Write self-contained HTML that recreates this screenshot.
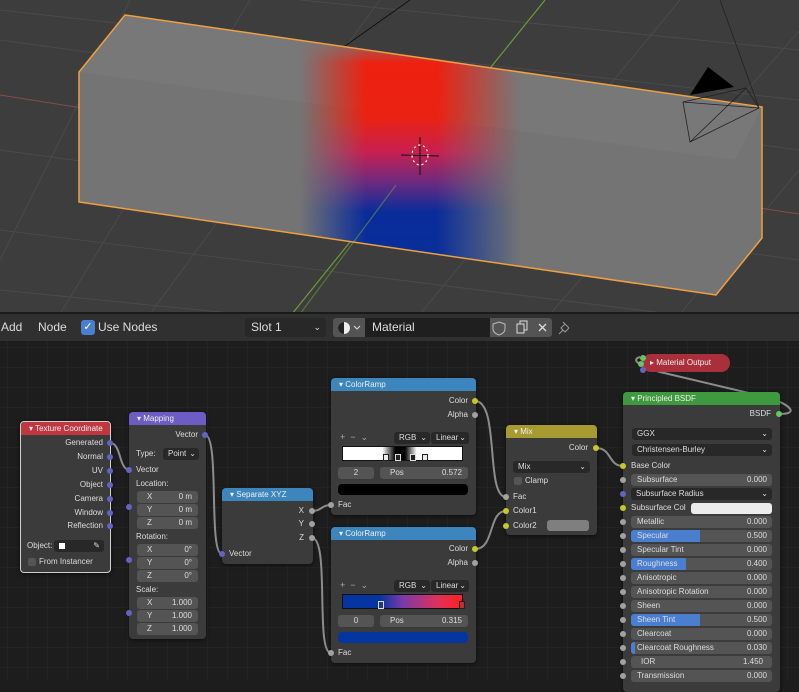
<!DOCTYPE html>
<html><head><meta charset="utf-8"><style>
*{margin:0;padding:0;box-sizing:border-box}
body{width:799px;height:680px;overflow:hidden;background:#1d1d1d;font-family:"Liberation Sans",sans-serif;position:relative}
.a{position:absolute}
.n{position:absolute;background:#3b3b3b;border-radius:4px;box-shadow:0 1px 4px rgba(0,0,0,.6)}
.h{position:absolute;left:0;right:0;top:0;height:13px;border-radius:4px 4px 0 0;color:#eee;font-size:8px;line-height:13px;padding-left:8px}
.t{position:absolute;font-size:8px;line-height:10px;color:#ddd;white-space:nowrap}
.r{text-align:right}
.f{position:absolute;background:#545454;border-radius:3px;height:12px;font-size:8px;line-height:12px;color:#ddd;white-space:nowrap}
.d{position:absolute;background:#282828;border-radius:3px;height:12px;font-size:8px;line-height:12px;color:#ddd;padding-left:5px}
.s{position:absolute;width:6px;height:6px;border-radius:50%;background:#a1a1a1}
.y{background:#c7c729}.p{background:#6363c7}.g{background:#63c763}
.hb{position:absolute;font-size:12px;line-height:26px;color:#ddd;top:314px}
</style></head><body>
<svg class="a" style="left:0;top:0" width="799" height="314">
<defs>
<clipPath id="bx"><polygon points="125,15 762,107 762,238 716,295 79,202 79,72"/></clipPath>
<linearGradient id="vg" gradientUnits="userSpaceOnUse" x1="0" y1="15" x2="0" y2="300"><stop offset="0" stop-color="#ee2010" stop-opacity="0"/><stop offset=".08" stop-color="#ee2010" stop-opacity="0"/><stop offset=".17" stop-color="#ee2010"/><stop offset=".36" stop-color="#ea2212"/><stop offset=".48" stop-color="#c82050"/><stop offset=".59" stop-color="#6a2a80"/><stop offset=".69" stop-color="#0a2c9a"/><stop offset="1" stop-color="#05309a"/></linearGradient>
<linearGradient id="hg" x1="0" y1="0" x2="1" y2="0"><stop offset="0" stop-color="#fff" stop-opacity="0"/><stop offset=".3" stop-color="#fff" stop-opacity="1"/><stop offset=".62" stop-color="#fff" stop-opacity="1"/><stop offset="1" stop-color="#fff" stop-opacity="0"/></linearGradient>
<mask id="mk"><rect x="300" y="0" width="220" height="314" fill="url(#hg)"/></mask>
</defs>
<rect width="799" height="314" fill="#3d3d3d"/>
<g stroke="#4a4a4a" stroke-width="1">
<line x1="0" y1="40" x2="799" y2="150"/><line x1="0" y1="150" x2="799" y2="260"/><line x1="0" y1="230" x2="799" y2="330"/><line x1="0" y1="10" x2="799" y2="100"/>
<line x1="0" y1="290" x2="500" y2="340"/><line x1="300" y1="0" x2="799" y2="50"/>
<line x1="60" y1="314" x2="250" y2="0"/><line x1="150" y1="314" x2="380" y2="0"/><line x1="420" y1="314" x2="680" y2="0"/><line x1="550" y1="314" x2="800" y2="30"/><line x1="0" y1="260" x2="130" y2="0"/><line x1="680" y1="314" x2="799" y2="170"/>
</g>
<line x1="0" y1="95" x2="82" y2="108" stroke="#8a4a4a"/><line x1="740" y1="205" x2="799" y2="214" stroke="#8a4a4a"/>
<line x1="545" y1="0" x2="292" y2="314" stroke="#6c9a3a" stroke-width="1.2"/>
<line x1="345" y1="46" x2="410" y2="0" stroke="#111"/>
<polygon points="125,15 762,107 762,238 716,295 79,202 79,72" fill="#747474"/>
<polygon points="125,15 762,107 735,160 79,72" fill="#787878"/>
<g clip-path="url(#bx)"><rect x="300" y="15" width="230" height="300" fill="url(#vg)" mask="url(#mk)"/></g>
<line x1="396" y1="185" x2="300" y2="314" stroke="#6c9a3a" stroke-width="1.2" opacity=".6"/>
<polygon points="125,15 762,107 762,238 716,295 79,202 79,72" fill="none" stroke="#f0a040" stroke-width="1.5"/>
<polygon points="708,67 690,95 734,87" fill="#000"/>
<g fill="none" stroke="#222" stroke-width="0.8"><polygon points="683,102 746,88 759,108 690,142"/><line x1="683" y1="102" x2="759" y2="108"/><line x1="746" y1="88" x2="690" y2="142"/><line x1="759" y1="108" x2="720" y2="0"/></g>
<g stroke="#111"><line x1="420" y1="137" x2="420" y2="175"/><line x1="401" y1="155" x2="439" y2="156"/></g>
<ellipse cx="420" cy="155" rx="8" ry="10" fill="none" stroke="#fff" stroke-dasharray="3,2" stroke-width="1.2"/>
<ellipse cx="420" cy="155" rx="8" ry="10" fill="none" stroke="#d02020" stroke-dasharray="3,2" stroke-dashoffset="2.5" stroke-width="1.2"/>
</svg>
<div class="a" style="left:0;top:312px;width:799px;height:2px;background:#1a1a1a"></div>
<div class="a" style="left:0;top:314px;width:799px;height:27px;background:#303030"></div>
<div class="hb" style="left:1px">Add</div>
<div class="hb" style="left:38px">Node</div>
<div class="a" style="left:81px;top:320px;width:14px;height:15px;border-radius:3px;background:#4a7fd0;color:#fff;font-size:11px;line-height:15px;text-align:center">✓</div>
<div class="hb" style="left:98px">Use Nodes</div>
<div class="a" style="left:245px;top:318px;width:81px;height:19px;background:#282828;border-radius:3px;color:#ddd;font-size:12px;line-height:19px;padding-left:6px">Slot 1<span style="position:absolute;right:5px;font-size:9px">⌄</span></div>
<div class="a" style="left:333px;top:318px;width:32px;height:19px;background:#545454;border-radius:3px 0 0 3px"></div>
<svg class="a" style="left:336px;top:320px" width="26" height="16"><circle cx="8" cy="8" r="6" fill="#eee"/><path d="M8 2 A6 6 0 0 0 8 14 Z" fill="#222"/><path d="M18 6 l3 3 l3 -3" stroke="#ddd" fill="none"/></svg>
<div class="a" style="left:365px;top:318px;width:125px;height:19px;background:#1f1f1f;color:#ddd;font-size:12px;line-height:19px;padding-left:7px">Material</div>
<div class="a" style="left:490px;top:318px;width:62px;height:19px;background:#545454;border-radius:0 3px 3px 0"></div>
<svg class="a" style="left:490px;top:318px" width="90" height="19"><path d="M9 4 l6 2 v5 q0 4 -6 6 q-6 -2 -6 -6 v-5z" fill="none" stroke="#bbb"/><rect x="27" y="6" width="7" height="9" fill="none" stroke="#ddd"/><path d="M30 6 v-3 h7 v9 h-3" fill="none" stroke="#ddd"/><path d="M49 6 l7 7 M56 6 l-7 7" stroke="#ddd" stroke-width="1.3"/><path d="M73 4 l6 6 M75 6 l-4 4 l4 4 l4 -4 M73 12 l-4 4" stroke="#999" fill="none"/></svg>
<svg class="a" style="left:0;top:341px" width="799" height="339">
<defs><pattern id="gp" width="20" height="20" patternUnits="userSpaceOnUse" x="8" y="7"><path d="M20 0 V20 M0 20 H20" stroke="#292929" stroke-width="1" fill="none"/></pattern></defs>
<rect width="799" height="339" fill="url(#gp)"/>
<g fill="none" stroke="#8c8c8c" stroke-width="2" transform="translate(0,-341)">
<path d="M110 443 C122 443 118 470 130 470"/>
<path d="M205 435 C220 435 208 554 222 554"/>
<path d="M312 511 C322 511 321 505 331 505"/>
<path d="M312 538 C330 538 315 653 331 653"/>
<path d="M475 401 C500 401 485 497 506 497"/>
<path d="M475 549 C495 549 488 511 506 511"/>
<path d="M596 448 C612 448 608 466 623 466"/>
<path d="M779 414 C800 414 790 405 770 398 L660 372 C640 366 630 360 640 357"/>
</g></svg>
<div class="n" style="left:20px;top:421px;width:91px;height:152px;border:1px solid #cfcfcf"><div class="h" style="background:#c0373f">▾ Texture Coordinate</div></div>
<div class="t r" style="left:20px;width:83px;top:438px">Generated</div>
<div class="t r" style="left:20px;width:83px;top:452px">Normal</div>
<div class="t r" style="left:20px;width:83px;top:466px">UV</div>
<div class="t r" style="left:20px;width:83px;top:480px">Object</div>
<div class="t r" style="left:20px;width:83px;top:494px">Camera</div>
<div class="t r" style="left:20px;width:83px;top:508px">Window</div>
<div class="t r" style="left:20px;width:83px;top:521px">Reflection</div>
<div class="s p" style="left:107px;top:440px"></div><div class="s p" style="left:107px;top:454px"></div><div class="s p" style="left:107px;top:468px"></div><div class="s p" style="left:107px;top:482px"></div><div class="s p" style="left:107px;top:496px"></div><div class="s p" style="left:107px;top:510px"></div><div class="s p" style="left:107px;top:523px"></div>
<div class="t" style="left:27px;top:541px">Object:</div>
<div class="d" style="left:54px;top:540px;width:50px"><span style="display:inline-block;width:6px;height:6px;background:#fff;margin-top:3px"></span><span style="position:absolute;right:4px;top:0">✎</span></div>
<div class="a" style="left:28px;top:558px;width:8px;height:8px;background:#555;border-radius:2px"></div>
<div class="t" style="left:39px;top:557px">From Instancer</div>
<div class="n" style="left:129px;top:412px;width:77px;height:227px"><div class="h" style="background:#6d5cc4">▾ Mapping</div></div>
<div class="t r" style="left:129px;width:69px;top:430px">Vector</div><div class="s p" style="left:202px;top:432px"></div>
<div class="t" style="left:136px;top:449px">Type:</div>
<div class="d" style="left:163px;top:448px;width:36px">Point<span style="position:absolute;right:3px">⌄</span></div>
<div class="s p" style="left:126px;top:467px"></div><div class="t" style="left:136px;top:465px">Vector</div>
<div class="t" style="left:136px;top:479px">Location:</div>
<div class="s p" style="left:126px;top:504px"></div>
<div class="f" style="left:137px;top:491px;width:61px"><span style="position:absolute;left:10px">X</span><span style="position:absolute;right:6px">0 m</span></div>
<div class="f" style="left:137px;top:504px;width:61px"><span style="position:absolute;left:10px">Y</span><span style="position:absolute;right:6px">0 m</span></div>
<div class="f" style="left:137px;top:517px;width:61px"><span style="position:absolute;left:10px">Z</span><span style="position:absolute;right:6px">0 m</span></div>
<div class="t" style="left:136px;top:532px">Rotation:</div>
<div class="s p" style="left:126px;top:557px"></div>
<div class="f" style="left:137px;top:544px;width:61px"><span style="position:absolute;left:10px">X</span><span style="position:absolute;right:6px">0°</span></div>
<div class="f" style="left:137px;top:557px;width:61px"><span style="position:absolute;left:10px">Y</span><span style="position:absolute;right:6px">0°</span></div>
<div class="f" style="left:137px;top:570px;width:61px"><span style="position:absolute;left:10px">Z</span><span style="position:absolute;right:6px">0°</span></div>
<div class="t" style="left:136px;top:585px">Scale:</div>
<div class="s p" style="left:126px;top:610px"></div>
<div class="f" style="left:137px;top:597px;width:61px"><span style="position:absolute;left:10px">X</span><span style="position:absolute;right:6px">1.000</span></div>
<div class="f" style="left:137px;top:610px;width:61px"><span style="position:absolute;left:10px">Y</span><span style="position:absolute;right:6px">1.000</span></div>
<div class="f" style="left:137px;top:623px;width:61px"><span style="position:absolute;left:10px">Z</span><span style="position:absolute;right:6px">1.000</span></div>
<div class="n" style="left:222px;top:488px;width:91px;height:76px"><div class="h" style="background:#3c86bd">▾ Separate XYZ</div></div>
<div class="t r" style="left:222px;width:82px;top:506px">X</div><div class="s" style="left:309px;top:508px"></div>
<div class="t r" style="left:222px;width:82px;top:519px">Y</div><div class="s" style="left:309px;top:521px"></div>
<div class="t r" style="left:222px;width:82px;top:533px">Z</div><div class="s" style="left:309px;top:535px"></div>
<div class="s p" style="left:219px;top:551px"></div><div class="t" style="left:229px;top:549px">Vector</div>
<div class="n" style="left:331px;top:378px;width:145px;height:137px"><div class="h" style="background:#3c86bd">▾ ColorRamp</div></div>
<div class="t r" style="left:331px;width:137px;top:396px">Color</div><div class="s y" style="left:472px;top:398px"></div>
<div class="t r" style="left:331px;width:137px;top:410px">Alpha</div><div class="s" style="left:472px;top:412px"></div>
<div class="t" style="left:340px;top:432px;color:#aaa;font-size:9px">+&nbsp;&nbsp;−&nbsp;&nbsp;⌄</div>
<div class="d" style="left:394px;top:432px;width:36px">RGB<span style="position:absolute;right:3px">⌄</span></div>
<div class="d" style="left:431px;top:432px;width:38px">Linear<span style="position:absolute;right:3px">⌄</span></div>
<div class="a" style="left:342px;top:446px;width:121px;height:15px;border:1px solid #111;background:linear-gradient(90deg,#fff 0%,#fff 33%,#000 44%,#000 52%,#fff 62%,#fff 100%)"></div>
<div class="a" style="left:383px;top:454px;width:6px;height:7px;background:#eee;border:1px solid #222"></div>
<div class="a" style="left:395px;top:454px;width:6px;height:7px;background:#222;border:1px solid #ddd"></div>
<div class="a" style="left:410px;top:454px;width:6px;height:7px;background:#222;border:1px solid #ddd"></div>
<div class="a" style="left:422px;top:454px;width:6px;height:7px;background:#eee;border:1px solid #222"></div>
<div class="f" style="left:338px;top:467px;width:36px;text-align:center">2</div>
<div class="f" style="left:380px;top:467px;width:88px"><span style="position:absolute;left:10px">Pos</span><span style="position:absolute;right:6px">0.572</span></div>
<div class="a" style="left:338px;top:484px;width:130px;height:11px;background:#000;border-radius:4px"></div>
<div class="s" style="left:328px;top:502px"></div><div class="t" style="left:338px;top:500px">Fac</div>
<div class="n" style="left:331px;top:527px;width:145px;height:136px"><div class="h" style="background:#3c86bd">▾ ColorRamp</div></div>
<div class="t r" style="left:331px;width:137px;top:544px">Color</div><div class="s y" style="left:472px;top:546px"></div>
<div class="t r" style="left:331px;width:137px;top:558px">Alpha</div><div class="s" style="left:472px;top:560px"></div>
<div class="t" style="left:340px;top:580px;color:#aaa;font-size:9px">+&nbsp;&nbsp;−&nbsp;&nbsp;⌄</div>
<div class="d" style="left:394px;top:580px;width:36px">RGB<span style="position:absolute;right:3px">⌄</span></div>
<div class="d" style="left:431px;top:580px;width:38px">Linear<span style="position:absolute;right:3px">⌄</span></div>
<div class="a" style="left:342px;top:594px;width:121px;height:15px;border:1px solid #111;background:linear-gradient(90deg,#0535a0 0%,#0535a0 31%,#7a3aa8 50%,#e0305a 80%,#ff2020 100%)"></div>
<div class="a" style="left:378px;top:601px;width:6px;height:8px;background:#1c3a8a;border:1px solid #ddd"></div>
<div class="a" style="left:459px;top:601px;width:6px;height:8px;background:#c03030;border:1px solid #222"></div>
<div class="f" style="left:338px;top:615px;width:36px;text-align:center">0</div>
<div class="f" style="left:380px;top:615px;width:88px"><span style="position:absolute;left:10px">Pos</span><span style="position:absolute;right:6px">0.315</span></div>
<div class="a" style="left:338px;top:632px;width:130px;height:11px;background:#0535a0;border-radius:4px"></div>
<div class="s" style="left:328px;top:650px"></div><div class="t" style="left:338px;top:648px">Fac</div>
<div class="n" style="left:506px;top:425px;width:91px;height:110px"><div class="h" style="background:#a79a30">▾ Mix</div></div>
<div class="t r" style="left:506px;width:82px;top:443px">Color</div><div class="s y" style="left:593px;top:445px"></div>
<div class="d" style="left:513px;top:461px;width:77px">Mix<span style="position:absolute;right:4px">⌄</span></div>
<div class="a" style="left:514px;top:477px;width:8px;height:8px;background:#555;border-radius:2px"></div><div class="t" style="left:525px;top:476px">Clamp</div>
<div class="s" style="left:503px;top:494px"></div><div class="t" style="left:513px;top:492px">Fac</div>
<div class="s y" style="left:503px;top:508px"></div><div class="t" style="left:513px;top:506px">Color1</div>
<div class="s y" style="left:503px;top:523px"></div><div class="t" style="left:513px;top:521px">Color2</div>
<div class="a" style="left:547px;top:520px;width:42px;height:11px;background:#7f7f7f;border-radius:3px"></div>
<div class="a" style="left:642px;top:354px;width:88px;height:18px;background:#a9303a;border-radius:9px;color:#eee;font-size:8px;line-height:18px;padding-left:8px">▸ Material Output</div>
<div class="s g" style="left:640px;top:355px"></div><div class="s g" style="left:638px;top:361px"></div><div class="s p" style="left:640px;top:367px"></div>
<div class="n" style="left:623px;top:392px;width:157px;height:300px"><div class="h" style="background:#3f9a3f">▾ Principled BSDF</div></div>
<div class="t r" style="left:623px;width:148px;top:409px">BSDF</div><div class="s g" style="left:776px;top:411px"></div>
<div class="d" style="left:632px;top:428px;width:140px">GGX<span style="position:absolute;right:4px">⌄</span></div>
<div class="d" style="left:632px;top:444px;width:140px">Christensen-Burley<span style="position:absolute;right:4px">⌄</span></div>
<div class="s y" style="left:620px;top:463px"></div><div class="t" style="left:631px;top:461px">Base Color</div>
<div class="s" style="left:620px;top:477px"></div><div class="f" style="left:631px;top:474px;width:141px"><span style="position:absolute;left:6px">Subsurface</span><span style="position:absolute;right:5px">0.000</span></div>
<div class="s p" style="left:620px;top:491px"></div><div class="d" style="left:631px;top:488px;width:141px">Subsurface Radius<span style="position:absolute;right:4px">⌄</span></div>
<div class="s y" style="left:620px;top:505px"></div><div class="t" style="left:631px;top:503px">Subsurface Col</div><div class="a" style="left:691px;top:503px;width:81px;height:11px;background:#ececec;border-radius:3px"></div>
<div class="s" style="left:620px;top:519px"></div><div class="f" style="left:631px;top:516px;width:141px"><span style="position:absolute;left:6px">Metallic</span><span style="position:absolute;right:5px">0.000</span></div>
<div class="s" style="left:620px;top:533px"></div><div class="f" style="left:631px;top:530px;width:141px;background:linear-gradient(90deg,#4a7fd0 49%,#545454 49%)"><span style="position:absolute;left:6px">Specular</span><span style="position:absolute;right:5px">0.500</span></div>
<div class="s" style="left:620px;top:547px"></div><div class="f" style="left:631px;top:544px;width:141px"><span style="position:absolute;left:6px">Specular Tint</span><span style="position:absolute;right:5px">0.000</span></div>
<div class="s" style="left:620px;top:561px"></div><div class="f" style="left:631px;top:558px;width:141px;background:linear-gradient(90deg,#4a7fd0 39%,#545454 39%)"><span style="position:absolute;left:6px">Roughness</span><span style="position:absolute;right:5px">0.400</span></div>
<div class="s" style="left:620px;top:575px"></div><div class="f" style="left:631px;top:572px;width:141px"><span style="position:absolute;left:6px">Anisotropic</span><span style="position:absolute;right:5px">0.000</span></div>
<div class="s" style="left:620px;top:589px"></div><div class="f" style="left:631px;top:586px;width:141px"><span style="position:absolute;left:6px">Anisotropic Rotation</span><span style="position:absolute;right:5px">0.000</span></div>
<div class="s" style="left:620px;top:603px"></div><div class="f" style="left:631px;top:600px;width:141px"><span style="position:absolute;left:6px">Sheen</span><span style="position:absolute;right:5px">0.000</span></div>
<div class="s" style="left:620px;top:617px"></div><div class="f" style="left:631px;top:614px;width:141px;background:linear-gradient(90deg,#4a7fd0 49%,#545454 49%)"><span style="position:absolute;left:6px">Sheen Tint</span><span style="position:absolute;right:5px">0.500</span></div>
<div class="s" style="left:620px;top:631px"></div><div class="f" style="left:631px;top:628px;width:141px"><span style="position:absolute;left:6px">Clearcoat</span><span style="position:absolute;right:5px">0.000</span></div>
<div class="s" style="left:620px;top:645px"></div><div class="f" style="left:631px;top:642px;width:141px;background:linear-gradient(90deg,#4a7fd0 3%,#545454 3%)"><span style="position:absolute;left:6px">Clearcoat Roughness</span><span style="position:absolute;right:5px">0.030</span></div>
<div class="s" style="left:620px;top:659px"></div><div class="f" style="left:631px;top:656px;width:141px"><span style="position:absolute;left:10px">IOR</span><span style="position:absolute;right:9px">1.450</span></div>
<div class="s" style="left:620px;top:673px"></div><div class="f" style="left:631px;top:670px;width:141px"><span style="position:absolute;left:6px">Transmission</span><span style="position:absolute;right:5px">0.000</span></div>
</body></html>
